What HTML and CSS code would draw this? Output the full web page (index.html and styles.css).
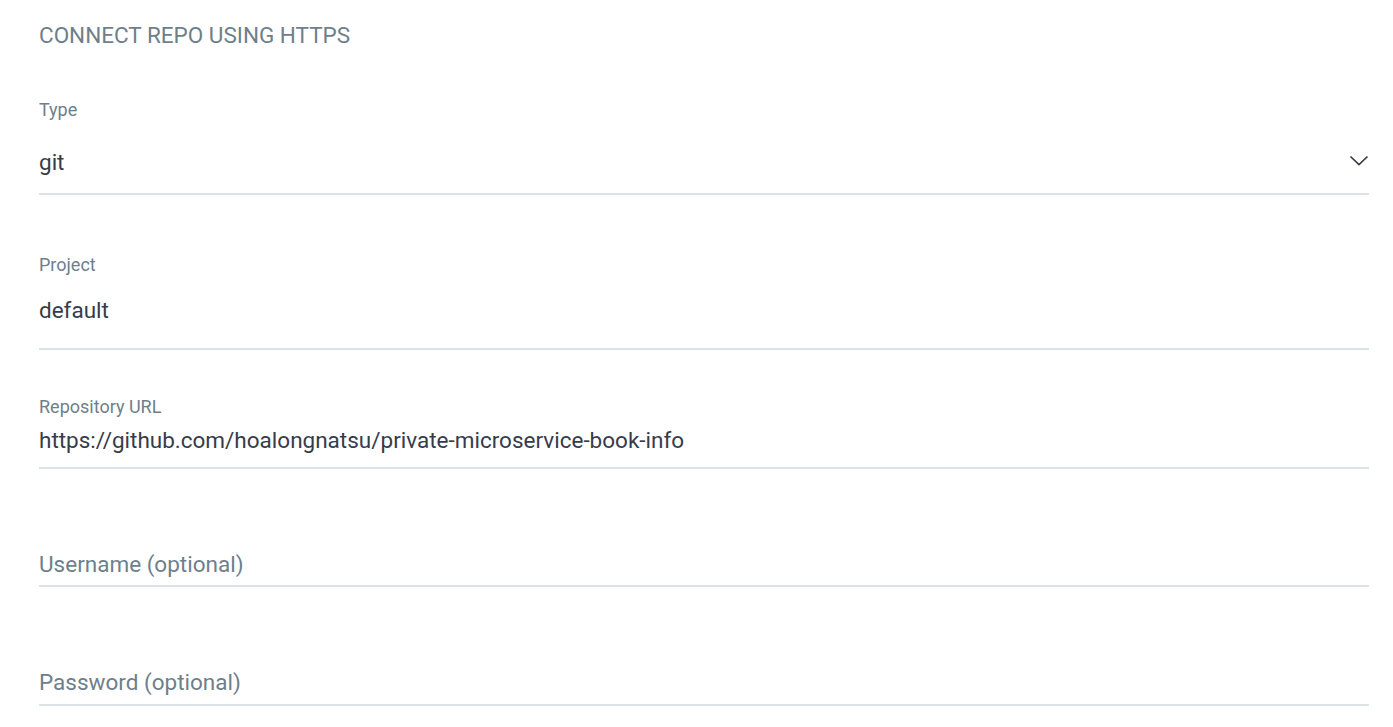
FILE: index.html
```html
<!DOCTYPE html>
<html lang="en">
<head>
<meta charset="utf-8">
<title>Connect repo using HTTPS</title>
<link rel="stylesheet" href="styles.css">
</head>
<body>
<div class="panel">
  <h2 class="title">CONNECT REPO USING HTTPS</h2>

  <div class="field field--type">
    <div class="label">Type</div>
    <div class="control control--select">
      <span class="value">git</span>
      <svg class="chevron" width="20" height="11" viewBox="0 0 20 11" aria-hidden="true"><polyline points="1.5,1.5 10,9.5 18.5,1.5" fill="none" stroke="#363c4a" stroke-width="1.7"/></svg>
    </div>
  </div>

  <div class="field field--project">
    <div class="label">Project</div>
    <div class="control control--project"><span class="value">default</span></div>
  </div>

  <div class="field field--url">
    <div class="label">Repository URL</div>
    <div class="control control--url"><span class="value">https://github.com/hoalongnatsu/private-microservice-book-info</span></div>
  </div>

  <div class="field field--user">
    <div class="control control--user"><span class="placeholder">Username (optional)</span></div>
  </div>

  <div class="field field--pass">
    <div class="control control--pass"><span class="placeholder">Password (optional)</span></div>
  </div>
</div>
</body>
</html>
```

FILE: styles.css
```css
html, body {
  margin: 0;
  padding: 0;
  background: #ffffff;
}

body {
  font-family: Roboto, "Liberation Sans", sans-serif;
  overflow: hidden;
}

.panel {
  padding: 22px 24px 0 39px;
}

.title {
  margin: 0;
  font-size: 22.5px;
  line-height: 27px;
  font-weight: 400;
  color: #6d7f8b;
}

.label {
  font-size: 18px;
  line-height: 21px;
  color: #6d7f8b;
}

.control {
  display: flex;
  align-items: center;
  justify-content: space-between;
  border-bottom: 2px solid #dae2e8;
  font-size: 22.5px;
  line-height: 27px;
}

.value {
  color: #363c4a;
}

.placeholder {
  color: #6d7f8b;
}

.chevron {
  display: block;
  margin-right: 0;
  margin-top: -4px;
}

.field--type { padding-top: 50px; }
.control--select { margin-top: 29px; padding-bottom: 17px; }

.field--project { padding-top: 59px; }
.control--project { margin-top: 22px; padding-bottom: 24px; }

.field--url { padding-top: 46px; }
.control--url { margin-top: 10px; padding-bottom: 13px; }

.field--user { padding-top: 82px; }
.control--user { padding-bottom: 7px; }

.field--pass { padding-top: 82px; }
.control--pass { padding-bottom: 8px; }
```
